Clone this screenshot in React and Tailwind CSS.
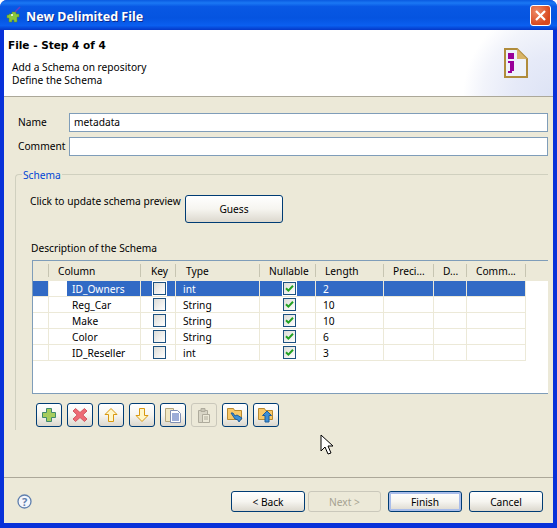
import React from "react";

const font = { fontFamily: '"Noto Sans", Tahoma, sans-serif' };
const cols = [
  ["", 16, ""], ["Column", 92, "pl-[9px]"], ["Key", 35, "pl-[10px]"], ["Type", 84, "pl-[10px]"], ["Nullable", 56, "pl-[9px]"], ["Length", 68, "pl-[9px]"], ["Preci...", 50, "pl-[9px]"], ["D...", 33, "pl-[9px]"], ["Comm...", 59, "pl-[9px]"],
];
const rows = [
  ["ID_Owners", "int", "2"], ["Reg_Car", "String", "10"], ["Make", "String", "10"], ["Color", "String", "6"], ["ID_Reseller", "int", "3"],
];

function Btn({ children, className = "", disabled, def }) {
  return (
    <div className={"flex items-center justify-center rounded-[3px] border text-[10.2px] " + (disabled ? "border-[#cac8bb] text-[#a5a291] bg-[#ece9d8] " : "border-[#003c74] text-black bg-gradient-to-b from-white via-[#f6f5f0] to-[#dcd8ce] ") + (def ? "shadow-[inset_0_0_0_2px_#a9bdea] " : "") + className}>
      {children}
    </div>
  );
}

function Check({ on }) {
  return (
    <div className="h-full flex items-center px-[1px] bg-white">
      <div className="w-[13px] h-[13px] border border-[#1c5180] bg-gradient-to-br from-[#dcdcd7] to-white flex items-center justify-center">
        {on && (
          <svg width="9" height="9" viewBox="0 0 9 9"><path d="M1 4.200 L3.400 6.600 L8 1.800" stroke="#21a121" strokeWidth="2" fill="none" /></svg>
        )}
      </div>
    </div>
  );
}

const icons = [
  <svg width="16" height="16" viewBox="0 0 16 16"><path d="M5.500 1.500h5v4h4v5h-4v4h-5v-4h-4v-5h4z" fill="#a6cc5c" stroke="#3f8a6c" /></svg>,
  <svg width="16" height="16" viewBox="0 0 16 16"><path d="M3.500 1.500 8 5.500l4.500-4 2.500 2.500-4.200 4 4.200 4-2.500 2.500-4.500-4-4.500 4L1 12l4.200-4L1 4z" fill="#ee6a74" stroke="#d25a62" /></svg>,
  <svg width="16" height="16" viewBox="0 0 16 16"><path d="M8 1.500 14 7.500h-3.500v7h-5v-7H2z" fill="#fff6c8" stroke="#d9980f" /></svg>,
  <svg width="16" height="16" viewBox="0 0 16 16"><path d="M8 14.500 14 8.500h-3.500v-7h-5v7H2z" fill="#fff6c8" stroke="#d9980f" /></svg>,
  <svg width="18" height="17" viewBox="0 0 18 17"><path d="M1.500 1.500h8v13h-8z" fill="#f2e8c4" stroke="#b4a67c" /><path d="M6.500 3.500h7l3 3v9h-10z" fill="#fff" stroke="#8090b4" /><path d="M8 7h7M8 9h7M8 11h7M8 13h7" stroke="#3c5cb0" /></svg>,
  <svg width="16" height="17" viewBox="0 0 16 17"><path d="M2.500 3.500h9v12h-9z" fill="#d8d5c6" stroke="#aeab9c" /><path d="M5 1.500h4v3H5z" fill="#c8c5b6" stroke="#aeab9c" /><path d="M6.500 7.500h7v8h-7z" fill="#ece9d8" stroke="#aeab9c" /><path d="M8 10h4M8 12h4" stroke="#aeab9c" /></svg>,
  <svg width="18" height="16" viewBox="0 0 18 16"><path d="M1.500 1.500h6l1 2h7v9h-14z" fill="#f8c868" stroke="#b88a30" /><path d="M5 6l2 0 2 3 2-1 5 3-3 4-1-2-3-1z" fill="#3d8fd6" stroke="#1f5f9c" /></svg>,
  <svg width="18" height="16" viewBox="0 0 18 16"><path d="M1.500 1.500h6l1 2h7v9h-14z" fill="#f8c868" stroke="#b88a30" /><path d="M10 4l4.500 4.500H12V15H8V8.500H5.500z" fill="#3d8fd6" stroke="#1f5f9c" /></svg>,
];

export default function App() {
  return (
    <div style={font} className="relative w-[557px] h-[528px] overflow-hidden flex flex-col bg-[#0831d9] rounded-t-[7px] text-[10.2px] leading-[13px] text-black">
      <div className="h-[30px] shrink-0 flex items-center pt-[3px] pl-[6px] pr-[6px] bg-[linear-gradient(to_bottom,#0a5ae0_0%,#1a78f4_10%,#0858e4_22%,#0554e0_60%,#0a5ff0_85%,#0438c8_100%)]">
        <svg width="16" height="18" viewBox="0 0 16 18" className="shrink-0 -mt-[3px]">
          <path d="M3 8h3V6h4v2h3v3h-2v5H8v-2H6v2H3v-4H1V9h2z" fill="#8cc63f" stroke="#5a8a20" strokeWidth="0.500" />
          <path d="M9 6 14 1" stroke="#6a3fc0" strokeWidth="1.500" />
          <circle cx="6" cy="9" r="1" fill="#fff" />
        </svg>
        <span className="ml-[4px] text-white font-bold text-[12.5px] [text-shadow:1px_1px_0_#0a2a8c]">New Delimited File</span>
        <div className="ml-auto -mt-[3px] w-[21px] h-[21px] rounded-[3px] border border-white bg-[radial-gradient(circle_at_30%_30%,#ee8a66,#d8491f_70%)] flex items-center justify-center">
          <svg width="11" height="11" viewBox="0 0 11 11"><path d="M1 1 10 10M10 1 1 10" stroke="#fff" strokeWidth="2.200" /></svg>
        </div>
      </div>

      <div className="flex-1 min-h-0 ml-[4px] mr-[4px] mb-[5px] bg-[#ece9d8] flex flex-col">
        <div className="h-[67px] shrink-0 border-b border-[#aca899] flex justify-between bg-white bg-[radial-gradient(circle_at_100%_100%,#dde3f5_0px,#e6eaf8_40px,#f2f4fb_70px,#ffffff_90px)]">
          <div className="pl-[4px]">
            <div style={{ fontFamily: '"DejaVu Sans", sans-serif' }} className="mt-[8px] font-bold text-[10.5px] leading-[14px]">File - Step 4 of 4</div>
            <div className="mt-[9px] ml-[4px]">Add a Schema on repository</div>
            <div className="ml-[4px]">Define the Schema</div>
          </div>
          <svg width="24" height="30" viewBox="0 0 24 30" className="mt-[18px] mr-[25px]">
            <path d="M1 1h12l10 10v18H1z" fill="#eef2fb" stroke="#b08c3c" strokeWidth="2" />
            <path d="M13 1v10h10z" fill="#d8b468" />
            <rect x="4" y="5" width="6" height="6" fill="#990099" />
            <path d="M4 13h6v10H8v2H4v-2h2V15H4z" fill="#990099" />
          </svg>
        </div>

        <div className="flex-1 min-h-0 flex flex-col pt-[16px]">
          <div className="flex items-center pl-[14px] pr-[5px]">
            <span className="w-[51px]">Name</span>
            <div className="flex-1 h-[19px] bg-white border border-[#7f9db9] pl-[4px] flex items-center">metadata</div>
          </div>
          <div className="flex items-center pl-[14px] pr-[5px] mt-[5px]">
            <span className="w-[51px]">Comment</span>
            <div className="flex-1 h-[19px] bg-white border border-[#7f9db9]" />
          </div>

          <div className="relative ml-[11px] mr-[5px] mt-[18px] h-[256px] border-l border-t border-[#d0d0bf] rounded-tl-[4px] pl-[16px] pt-[20px]">
            <span className="absolute left-[6px] -top-[6px] px-[1px] bg-[#ece9d8] text-[#0046d5]">Schema</span>
            <div className="flex items-start -ml-[2px]">
              <span className="w-[155px] whitespace-nowrap">Click to update schema preview</span>
              <Btn className="w-[98px] h-[28px]">Guess</Btn>
            </div>
            <div className="mt-[19px] -ml-[1px]">Description of the Schema</div>
            <div className="mt-[5px] h-[134px] bg-white border-t border-l border-b border-[#7f9db9]">
              <div className="flex h-[20px] bg-[#ece9d8]">
                {cols.map(([t, w, p], i) => (
                  <div key={i} style={{ width: w }} className={"flex items-center border-r border-[#c7c5b2] h-[13px] mt-[3px] pt-[1px] whitespace-nowrap " + p}>
                    {t}
                  </div>
                ))}
                <div className="flex-1" />
              </div>
              {rows.map((r, i) => {
                const sel = i === 0;
                const blue = sel ? " bg-[#316ac5] text-white" : "";
                const cellB = "border-r border-[#ece9d8] h-full flex items-center ";
                return (
                  <div key={i} className="flex h-[16px] w-[493px] border-b border-[#ece9d8]">
                    <div style={{ width: 16 }} className={cellB + blue} />
                    <div style={{ width: 92 }} className={cellB + "pl-[18px]"}>
                      <div className={"flex-1 h-full flex items-center pl-[5px] pt-[1px]" + blue}>{r[0]}</div>
                    </div>
                    <div style={{ width: 35 }} className={cellB + "pl-[11px]" + blue}><Check /></div>
                    <div style={{ width: 84 }} className={cellB + "pl-[7px] pt-[1px]" + blue}>{r[1]}</div>
                    <div style={{ width: 56 }} className={cellB + "pl-[22px]" + blue}><Check on /></div>
                    <div style={{ width: 68 }} className={cellB + "pl-[7px] pt-[1px]" + blue}>{r[2]}</div>
                    <div style={{ width: 50 }} className={cellB + blue} />
                    <div style={{ width: 33 }} className={cellB + blue} />
                    <div style={{ width: 59 }} className={cellB + blue} />
                  </div>
                );
              })}
            </div>
            <div className="mt-[9px] ml-[4px] flex gap-[5px]">
              {icons.map((ic, i) => (
                <Btn key={i} disabled={i === 5} className="w-[26px] h-[24px]">{ic}</Btn>
              ))}
            </div>
          </div>

          <div className="mt-auto border-t border-[#aca899] h-[46px] shrink-0 flex items-start pt-[13px] pl-[13px]">
            <svg width="15" height="15" viewBox="0 0 15 15" className="mt-[3px]">
              <circle cx="7.500" cy="7.500" r="6.500" fill="#f4f6fb" stroke="#5f7fae" strokeWidth="1.300" />
              <text x="7.500" y="11.500" textAnchor="middle" fontSize="11" fontWeight="700" fill="#5f7fae" fontFamily="Noto Sans">?</text>
            </svg>
            <div className="ml-auto flex mr-[10px]">
              <Btn className="w-[74px] h-[21px] pt-[1px]">&lt; Back</Btn>
              <Btn disabled className="w-[73px] h-[21px] pt-[1px] ml-[3px]">Next &gt;</Btn>
              <Btn def className="w-[74px] h-[21px] pt-[1px] ml-[7px]">Finish</Btn>
              <Btn className="w-[74px] h-[21px] pt-[1px] ml-[7px]">Cancel</Btn>
            </div>
          </div>
        </div>
      </div>

      <svg width="13" height="22" viewBox="0 0 13 22" className="absolute left-[320px] top-[434px]">
        <path d="M1 1v16l4-4 3 7 3-1-3-7h5z" fill="#fff" stroke="#000" />
      </svg>
    </div>
  );
}
